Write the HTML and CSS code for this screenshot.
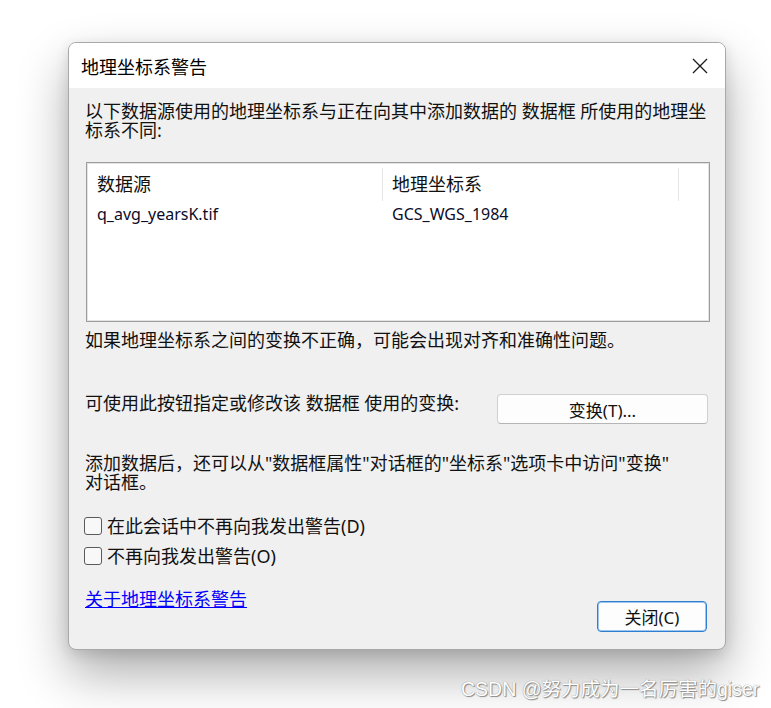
FILE: index.html
```html
<!DOCTYPE html>
<html lang="zh-CN">
<head>
<meta charset="utf-8">
<title>地理坐标系警告</title>
<link rel="stylesheet" href="styles.css">
</head>
<body>
<div class="page">
  <div class="dialog">
    <div class="titlebar">
      <span class="title">地理坐标系警告</span>
      <svg class="close-x" width="18" height="18" viewBox="0 0 18 18"><path d="M2 2 L16 16 M16 2 L2 16" stroke="#1a1a1a" stroke-width="1.3" fill="none"/></svg>
    </div>
    <div class="body">
      <p class="msg">以下数据源使用的地理坐标系与正在向其中添加数据的 数据框 所使用的地理坐标系不同:</p>
      <div class="listbox">
        <div class="lv-head">
          <div class="col c1">数据源</div>
          <div class="col c2">地理坐标系</div>
          <div class="col c3"></div>
        </div>
        <div class="lv-row">
          <div class="col c1">q_avg_yearsK.tif</div>
          <div class="col c2">GCS_WGS_1984</div>
        </div>
      </div>
      <p class="msg warn">如果地理坐标系之间的变换不正确，可能会出现对齐和准确性问题。</p>
      <div class="transform-row">
        <span class="msg">可使用此按钮指定或修改该 数据框 使用的变换:</span>
        <button class="btn transform-btn">变换(T)...</button>
      </div>
      <p class="msg note">添加数据后，还可以从"数据框属性"对话框的"坐标系"选项卡中访问"变换"<br>对话框。</p>
      <div class="checks">
        <label class="check"><span class="box"></span>在此会话中不再向我发出警告(D)</label>
        <label class="check"><span class="box"></span>不再向我发出警告(O)</label>
      </div>
      <div class="footer">
        <a class="link" href="#">关于地理坐标系警告</a>
        <button class="btn default-btn">关闭(C)</button>
      </div>
    </div>
  </div>
  <div class="watermark">CSDN @努力成为一名厉害的giser</div>
</div>
</body>
</html>
```

FILE: styles.css
```css
html, body {
  margin: 0;
  padding: 0;
  background: #ffffff;
}
body {
  font-family: "Noto Sans", "Noto Sans CJK SC", sans-serif;
  font-size: 18px;
  color: #111;
  width: 771px;
  height: 708px;
  overflow: hidden;
}
.page {
  position: relative;
  width: 771px;
  height: 708px;
  padding: 42px 0 0 68px;
  box-sizing: border-box;
}
.dialog {
  width: 658px;
  height: 608px;
  box-sizing: border-box;
  border: 1px solid #a9a9a9;
  border-radius: 8px;
  background: #f0f0f0;
  overflow: hidden;
  box-shadow: 0 24px 50px rgba(0, 0, 0, 0.32), 0 4px 14px rgba(0, 0, 0, 0.12);
  display: flex;
  flex-direction: column;
}
.titlebar {
  height: 45px;
  background: #ffffff;
  display: flex;
  align-items: center;
  justify-content: space-between;
  padding: 0 16px 0 12px;
  flex: none;
}
.title {
  font-family: "Noto Sans CJK SC", sans-serif;
  font-size: 18px;
  line-height: 22px;
  color: #000;
}
.close-x {
  display: block;
  margin-top: 1px;
}
.body {
  padding: 14px 15px 0 16px;
  display: flex;
  flex-direction: column;
}
.msg {
  margin: 0;
  line-height: 19px;
  font-family: "Noto Sans", "Noto Sans CJK SC", sans-serif;
}
.listbox {
  margin-top: 22px;
  margin-left: 1px;
  height: 160px;
  box-sizing: border-box;
  border: 1px solid #9c9c9c;
  background: #fff;
  box-shadow: inset 0 0 0 1px #e4e4e4;
}
.lv-head {
  display: flex;
  height: 38px;
  align-items: stretch;
}
.lv-head .col {
  display: flex;
  align-items: center;
  box-sizing: border-box;
}
.col.c1 {
  width: 296px;
  padding-left: 10px;
  box-sizing: border-box;
}
.col.c2 {
  width: 296px;
  padding-left: 9px;
  box-sizing: border-box;
}
.lv-head .c1,
.lv-head .c2 {
  border-right: 1px solid #e5e5e5;
  margin-top: 5px;
  padding-bottom: 3px;
}
.lv-head .c3 {
  flex: 1;
}
.lv-row {
  display: flex;
  height: 28px;
  align-items: center;
  font-size: 16px;
  color: #0c0c2a;
  margin-top: -1px;
}
.warn {
  margin-top: 9px;
}
.transform-row {
  display: flex;
  justify-content: space-between;
  align-items: flex-start;
  margin-top: 44px;
}
.btn {
  font-family: "Noto Sans", "Noto Sans CJK SC", sans-serif;
  font-size: 17px;
  color: #111;
  background: #fdfdfd;
  border-radius: 4px;
  padding: 0;
  cursor: default;
}
.transform-btn {
  width: 211px;
  height: 30px;
  margin-top: 0;
  margin-right: 2px;
  border: 1px solid #d0d0d0;
  border-bottom-color: #b5b5b5;
}
.note {
  margin-top: 30px;
}
.checks {
  margin-top: 25px;
  display: flex;
  flex-direction: column;
  gap: 12px;
}
.check {
  display: flex;
  align-items: center;
  height: 18px;
  line-height: 19px;
}
.box {
  width: 18px;
  height: 18px;
  box-sizing: border-box;
  border: 1px solid #5a5a5a;
  border-radius: 3px;
  background: #f8f8f8;
  margin-right: 5px;
  margin-left: -1px;
  flex: none;
}
.footer {
  display: flex;
  justify-content: space-between;
  align-items: flex-start;
  margin-top: 25px;
}
.link {
  color: #0000ff;
  text-decoration: underline;
  line-height: 19px;
}
.default-btn {
  width: 110px;
  height: 31px;
  margin-top: 11px;
  margin-right: 3px;
  border: 1px solid #2f7fd0;
  box-shadow: inset 0 0 0 1px #9cc6ef;
}
.watermark {
  position: absolute;
  left: 461px;
  top: 676px;
  font-family: "Liberation Sans", "Noto Sans CJK SC", sans-serif;
  font-size: 19.5px;
  line-height: 26px;
  color: #ffffff;
  text-shadow: 0 0 1px #7a7a7a, 1px 1px 1px #8a8a8a;
}
```
